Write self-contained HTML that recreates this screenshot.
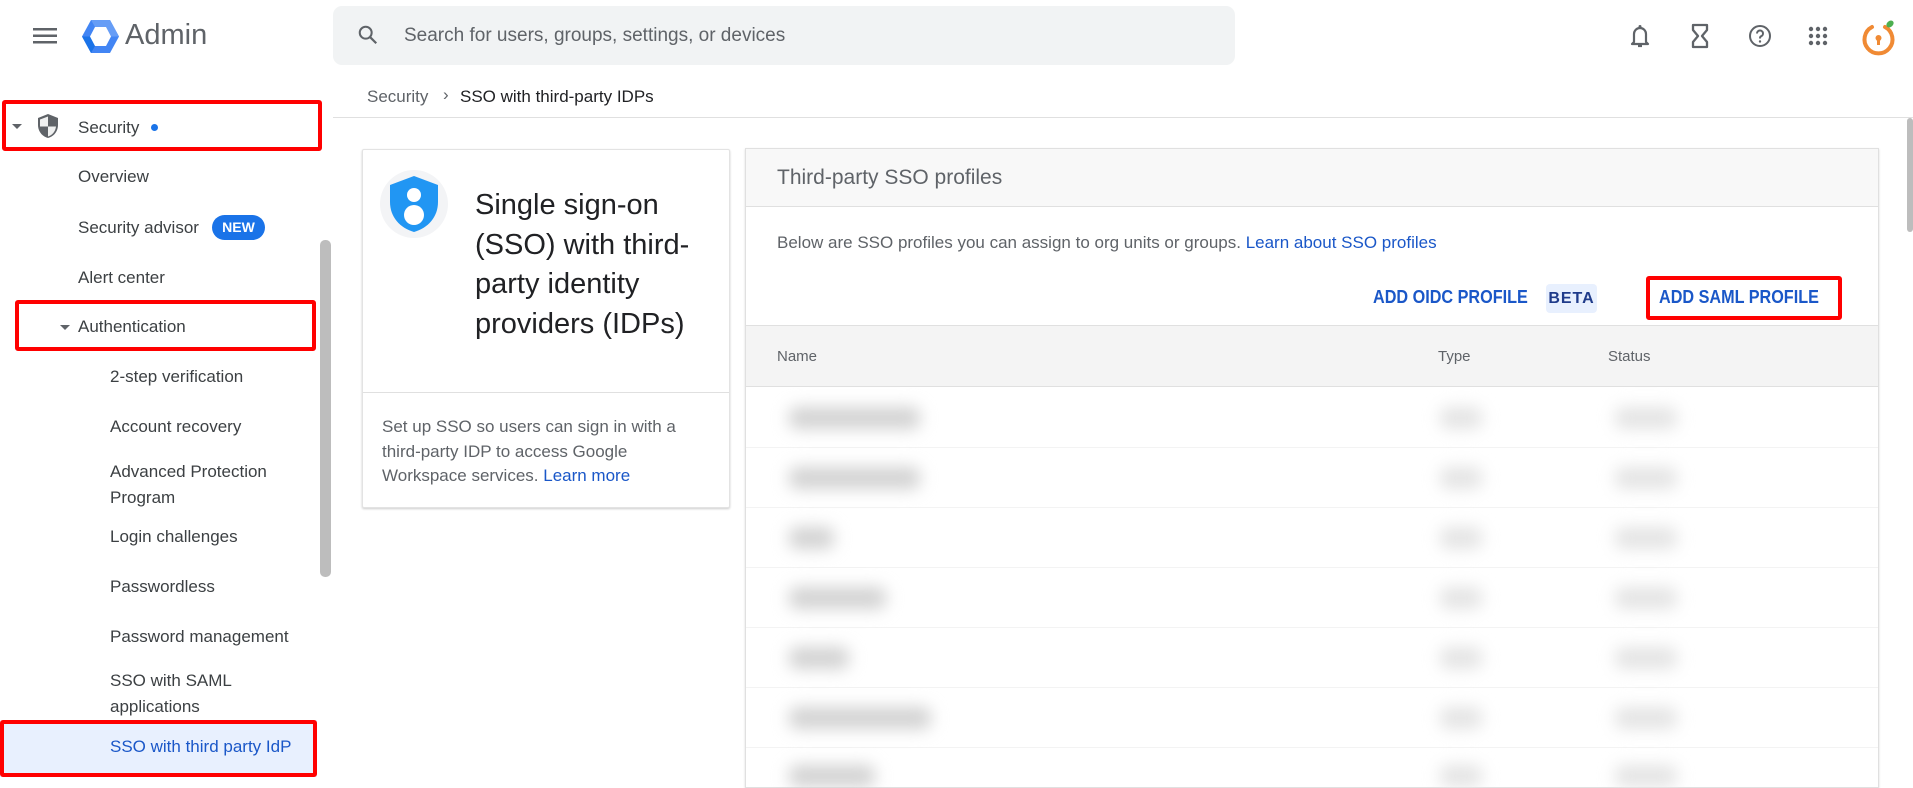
<!DOCTYPE html>
<html><head><meta charset="utf-8">
<style>
*{box-sizing:border-box;margin:0;padding:0}
body{width:1913px;height:777px;overflow:hidden;background:#fff;font-family:"Liberation Sans",Arial,sans-serif;color:#3c4043;position:relative}
.a{position:absolute;white-space:nowrap}
.nav{font-size:17px;color:#3c4043;line-height:20px}
.red{position:absolute;border:4px solid #f00;border-radius:3px}
.blob{position:absolute;background:#d2d2d2;filter:blur(8px);border-radius:8px;height:22px}
.t{background:#e4e4e4;width:42px}
.s{background:#e4e4e4;width:62px}
.rowline{position:absolute;left:746px;width:1132px;height:1px;background:#f3f3f3}
</style></head><body>

<!-- header -->
<svg class="a" style="left:33px;top:28px" width="24" height="16"><rect y="0" width="24" height="2.5" fill="#5f6368"/><rect y="6.5" width="24" height="2.5" fill="#5f6368"/><rect y="13" width="24" height="2.5" fill="#5f6368"/></svg>
<svg class="a" style="left:82px;top:20px" width="37" height="33" viewBox="0 0 37 33"><polygon points="9,0 28,0 37,16.5 28,33 9,33 0,16.5" fill="#4285f4"/><polygon points="9,0 28,0 37,16.5 18.5,16.5" fill="#669df6"/><polygon points="0,16.5 18.5,16.5 9,33" fill="#1a73e8"/><polygon points="13,7 24,7 29,16.5 24,26 13,26 8,16.5" fill="#fff"/></svg>
<div class="a" style="left:125px;top:19px;font-size:29px;color:#5f6368">Admin</div>

<div class="a" style="left:333px;top:6px;width:902px;height:59px;background:#f1f3f4;border-radius:9px"></div>
<svg class="a" style="left:357px;top:24px" width="22" height="22" viewBox="0 0 24 24"><circle cx="9.5" cy="9.5" r="6.5" fill="none" stroke="#5f6368" stroke-width="2.2"/><line x1="14.5" y1="14.5" x2="21" y2="21" stroke="#5f6368" stroke-width="2.4"/></svg>
<div class="a" style="left:404px;top:25px;font-size:19px;color:#5f6368">Search for users, groups, settings, or devices</div>

<svg class="a" style="left:1628px;top:23px" width="24" height="26" viewBox="0 0 24 26"><path d="M6 19V11a6 6 0 0 1 12 0v8l2 2H4z" fill="none" stroke="#5f6368" stroke-width="2.2" stroke-linejoin="round"/><circle cx="12" cy="3.5" r="1.5" fill="#5f6368"/><path d="M10 23h4" stroke="#5f6368" stroke-width="2.2"/></svg>
<svg class="a" style="left:1690px;top:23px" width="20" height="26" viewBox="0 0 20 26"><path d="M3 2h14v5l-5 6 5 6v5H3v-5l5-6-5-6z" fill="none" stroke="#5f6368" stroke-width="2.3" stroke-linejoin="round"/></svg>
<svg class="a" style="left:1748px;top:24px" width="24" height="24" viewBox="0 0 24 24"><circle cx="12" cy="12" r="10" fill="none" stroke="#5f6368" stroke-width="2"/><path d="M9 9.5a3 3 0 1 1 4 2.8c-1 .5-1 1.2-1 2.2" fill="none" stroke="#5f6368" stroke-width="2"/><circle cx="12" cy="17.5" r="1.2" fill="#5f6368"/></svg>
<svg class="a" style="left:1808px;top:26px" width="20" height="20" viewBox="0 0 20 20" fill="#5f6368"><circle cx="3" cy="3" r="2.2"/><circle cx="10" cy="3" r="2.2"/><circle cx="17" cy="3" r="2.2"/><circle cx="3" cy="10" r="2.2"/><circle cx="10" cy="10" r="2.2"/><circle cx="17" cy="10" r="2.2"/><circle cx="3" cy="17" r="2.2"/><circle cx="10" cy="17" r="2.2"/><circle cx="17" cy="17" r="2.2"/></svg>
<svg class="a" style="left:1860px;top:16px" width="38" height="40" viewBox="0 0 38 40"><path d="M25 9A14 14 0 1 1 12 9" fill="none" stroke="#f08a34" stroke-width="4" stroke-linecap="round" transform="translate(0,2)"/><ellipse cx="30" cy="8" rx="4" ry="3" fill="#4caf50" transform="rotate(-40 30 8)"/><circle cx="18.5" cy="22" r="3" fill="#f08a34"/><rect x="17" y="23" width="3" height="6" fill="#f08a34"/></svg>

<!-- breadcrumb -->
<div class="a" style="left:367px;top:87px;font-size:17px;color:#5f6368">Security</div>
<div class="a" style="left:443px;top:85px;font-size:17px;color:#5f6368">›</div>
<div class="a" style="left:460px;top:87px;font-size:17px;color:#202124">SSO with third-party IDPs</div>
<div class="a" style="left:333px;top:117px;width:1580px;height:1px;background:#e0e0e0"></div>
<div class="a" style="left:1907px;top:118px;width:6px;height:114px;background:#bdbdbd;border-radius:3px"></div>

<!-- sidebar -->
<div class="red" style="left:2px;top:100px;width:320px;height:51px"></div>
<svg class="a" style="left:12px;top:124px" width="10" height="6"><polygon points="0,0 10,0 5,5" fill="#5f6368"/></svg>
<svg class="a" style="left:37px;top:113px" width="22" height="26" viewBox="0 0 22 26"><path d="M11 1L1 5v7c0 6.5 4.3 11.5 10 13 5.7-1.5 10-6.5 10-13V5z" fill="#5f6368"/><path d="M11 3.5v10H3V6.5z M11 13.5h8c-.5 4.8-3.6 8.6-8 10z" fill="#fff" opacity=".9"/></svg>
<div class="a nav" style="left:78px;top:118px">Security</div>
<div class="a" style="left:151px;top:124px;width:7px;height:7px;border-radius:50%;background:#1a73e8"></div>
<div class="a nav" style="left:78px;top:167px">Overview</div>
<div class="a nav" style="left:78px;top:218px">Security advisor</div>
<div class="a" style="left:212px;top:215px;width:53px;height:25px;border-radius:13px;background:#1a73e8;color:#fff;font-size:14px;font-weight:bold;text-align:center;line-height:25px">NEW</div>
<div class="a nav" style="left:78px;top:268px">Alert center</div>
<div class="red" style="left:15px;top:300px;width:301px;height:51px"></div>
<svg class="a" style="left:60px;top:325px" width="10" height="6"><polygon points="0,0 10,0 5,5" fill="#5f6368"/></svg>
<div class="a nav" style="left:78px;top:317px">Authentication</div>
<div class="a nav" style="left:110px;top:367px">2-step verification</div>
<div class="a nav" style="left:110px;top:417px">Account recovery</div>
<div class="a nav" style="left:110px;top:459px;line-height:26px;white-space:normal">Advanced Protection<br>Program</div>
<div class="a nav" style="left:110px;top:527px">Login challenges</div>
<div class="a nav" style="left:110px;top:577px">Passwordless</div>
<div class="a nav" style="left:110px;top:627px">Password management</div>
<div class="a nav" style="left:110px;top:668px;line-height:26px;white-space:normal">SSO with SAML<br>applications</div>
<div class="a" style="left:0;top:720px;width:317px;height:57px;background:#e8f0fe"></div>
<div class="red" style="left:0;top:720px;width:317px;height:57px"></div>
<div class="a nav" style="left:110px;top:737px;color:#1a57c8">SSO with third party IdP</div>
<div class="a" style="left:320px;top:240px;width:11px;height:337px;background:#bdbdbd;border-radius:5px"></div>

<!-- left card -->
<div class="a" style="left:362px;top:149px;width:368px;height:359px;background:#fff;border:1px solid #e3e3e3;box-shadow:0 1px 2px rgba(0,0,0,.2);border-radius:2px"></div>
<div class="a" style="left:380px;top:170px;width:68px;height:68px;border-radius:50%;background:#f3f4f6"></div>
<svg class="a" style="left:388px;top:175px" width="52" height="58" viewBox="0 0 52 58"><path d="M26 1L2 10v17c0 15 10 26 24 30 14-4 24-15 24-30V10z" fill="#2196f3"/><circle cx="26" cy="20" r="7" fill="#fff"/><circle cx="26" cy="40" r="10" fill="#fff"/></svg>
<div class="a" style="left:475px;top:186px;font-size:29px;line-height:39.5px;color:#202124;white-space:normal">Single sign-on<br>(SSO) with third-<br>party identity<br>providers (IDPs)</div>
<div class="a" style="left:363px;top:392px;width:366px;height:1px;background:#e0e0e0"></div>
<div class="a" style="left:382px;top:415px;font-size:17px;line-height:24.5px;color:#5f6368;white-space:normal">Set up SSO so users can sign in with a<br>third-party IDP to access Google<br>Workspace services. <span style="color:#1a57c8">Learn more</span></div>

<!-- right card -->
<div class="a" style="left:745px;top:148px;width:1134px;height:640px;background:#fff;border:1px solid #e0e0e0;box-shadow:0 1px 2px rgba(0,0,0,.15)"></div>
<div class="a" style="left:746px;top:149px;width:1132px;height:58px;background:#f8f8f8;border-bottom:1px solid #e0e0e0"></div>
<div class="a" style="left:777px;top:166px;font-size:21px;color:#5f6368">Third-party SSO profiles</div>
<div class="a" style="left:777px;top:233px;font-size:17px;color:#5f6368">Below are SSO profiles you can assign to org units or groups. <span style="color:#1a57c8">Learn about SSO profiles</span></div>
<div class="a" style="left:1373px;top:287px;font-size:18px;font-weight:bold;color:#1a57c8;transform:scaleX(.9);transform-origin:left">ADD OIDC PROFILE</div>
<div class="a" style="left:1546px;top:284px;width:51px;height:29px;background:#e8f0fe;border-radius:4px;font-size:16px;font-weight:bold;color:#1f3b8a;text-align:center;line-height:29px;letter-spacing:1px">BETA</div>
<div class="red" style="left:1646px;top:276px;width:196px;height:44px"></div>
<div class="a" style="left:1659px;top:287px;font-size:18px;font-weight:bold;color:#1a57c8;transform:scaleX(.9);transform-origin:left">ADD SAML PROFILE</div>
<div class="a" style="left:746px;top:325px;width:1132px;height:62px;background:#f4f4f4;border-top:1px solid #e0e0e0;border-bottom:1px solid #e0e0e0"></div>
<div class="a" style="left:777px;top:348px;font-size:15px;color:#5f6368">Name</div>
<div class="a" style="left:1438px;top:348px;font-size:15px;color:#5f6368">Type</div>
<div class="a" style="left:1608px;top:348px;font-size:15px;color:#5f6368">Status</div>

<div class="rowline" style="top:447px"></div><div class="rowline" style="top:507px"></div><div class="rowline" style="top:567px"></div><div class="rowline" style="top:627px"></div><div class="rowline" style="top:687px"></div><div class="rowline" style="top:747px"></div>

<div class="blob" style="left:789px;top:407px;width:131px"></div>
<div class="blob" style="left:789px;top:467px;width:131px"></div>
<div class="blob" style="left:789px;top:527px;width:45px"></div>
<div class="blob" style="left:789px;top:587px;width:97px"></div>
<div class="blob" style="left:789px;top:647px;width:60px"></div>
<div class="blob" style="left:789px;top:707px;width:142px"></div>
<div class="blob" style="left:789px;top:765px;width:86px"></div>

<div class="blob t" style="left:1440px;top:407px"></div>
<div class="blob t" style="left:1440px;top:467px"></div>
<div class="blob t" style="left:1440px;top:527px"></div>
<div class="blob t" style="left:1440px;top:587px"></div>
<div class="blob t" style="left:1440px;top:647px"></div>
<div class="blob t" style="left:1440px;top:707px"></div>
<div class="blob t" style="left:1440px;top:765px"></div>

<div class="blob s" style="left:1615px;top:407px"></div>
<div class="blob s" style="left:1615px;top:467px"></div>
<div class="blob s" style="left:1615px;top:527px"></div>
<div class="blob s" style="left:1615px;top:587px"></div>
<div class="blob s" style="left:1615px;top:647px"></div>
<div class="blob s" style="left:1615px;top:707px"></div>
<div class="blob s" style="left:1615px;top:765px"></div>
</body></html>
